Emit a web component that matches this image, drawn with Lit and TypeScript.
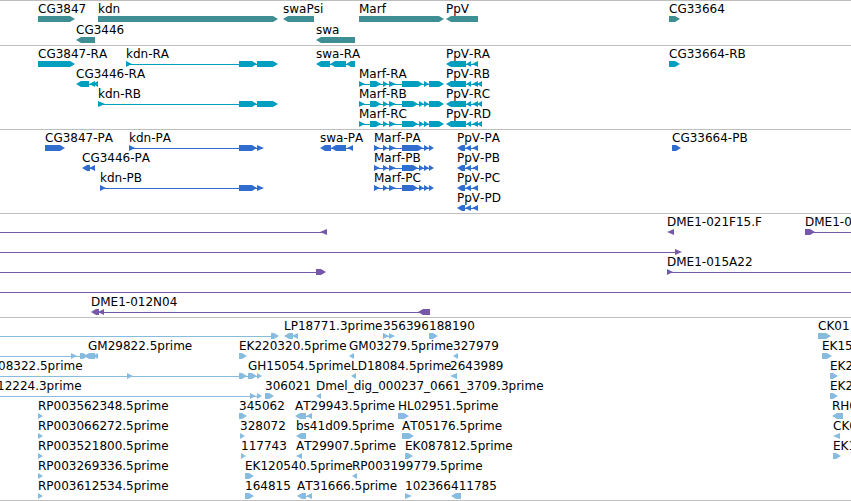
import { LitElement, html, css, svg } from "lit";
import { customElement, property } from "lit/decorators.js";
import { styleMap } from "lit/directives/style-map.js";

/** A block arrow: start, end and strand direction. */
type Arrow = [number, number, ">" | "<"];

interface Feature {
  at: number;
  label?: string;
  arrows?: Arrow[];
  /** Intron line; a missing end runs to the edge of the view. */
  line?: [number, number?];
}

type Row = Feature[];

interface Track {
  name: string;
  kind: string;
  rows: Row[];
}

const right = (...spans: [number, number][]): Arrow[] => spans.map(([a, b]) => [a, b, ">"]);
const left = (...spans: [number, number][]): Arrow[] => spans.map(([a, b]) => [a, b, "<"]);

/** A labelled feature whose arrows are joined by a line. */
const joined = (label: string, arrows: Arrow[]): Feature => ({
  at: arrows[0][0],
  label,
  arrows,
  line: [arrows[0][0] + 2, arrows[arrows.length - 1][1] - 2],
});

const plain = (label: string, arrows: Arrow[]): Feature => ({ at: arrows[0][0], label, arrows });

const kdnExons: [number, number][] = [[239, 257], [257, 278]];
const kdnCds: [number, number][] = [[239, 257], [257, 264]];
const marfLong = right([359, 365], [370, 381], [383, 388], [389, 396], [402, 418], [419, 424], [424, 429], [429, 444]);
const marfCds = right([374, 380], [383, 388], [389, 396], [402, 418], [419, 424], [424, 429], [429, 434]);
const ppvLong = left([446, 466], [466, 471], [472, 478], [477, 482]);
const ppvCds = left([457, 465], [465, 471], [472, 478]);

const tracks: Track[] = [
  {
    name: "Genes",
    kind: "gene",
    rows: [
      [
        plain("CG3847", right([38, 75])),
        plain("kdn", right([98, 278])),
        plain("swaPsi", left([283, 314])),
        plain("Marf", right([359, 444])),
        plain("PpV", left([446, 478])),
        plain("CG33664", right([669, 680])),
      ],
      [plain("CG3446", left([76, 95])), plain("swa", left([316, 355]))],
    ],
  },
  {
    name: "Transcripts",
    kind: "mrna",
    rows: [
      [
        plain("CG3847-RA", right([38, 75])),
        joined("kdn-RA", right([126, 132], ...kdnExons)),
        joined("swa-RA", left([316, 330], [330, 346], [346, 355])),
        joined("PpV-RA", left([446, 466], [466, 471], [472, 478])),
        plain("CG33664-RB", right([669, 680])),
      ],
      [
        joined("CG3446-RA", left([76, 89], [89, 95], [93, 98])),
        joined("Marf-RA", right([359, 365], [370, 381], [383, 388], [389, 396], [402, 423], [424, 429], [429, 444])),
        joined("PpV-RB", ppvLong),
      ],
      [
        joined("kdn-RB", right([98, 105], ...kdnExons)),
        joined("Marf-RB", marfLong),
        joined("PpV-RC", ppvLong),
      ],
      [joined("Marf-RC", marfLong), joined("PpV-RD", ppvLong)],
    ],
  },
  {
    name: "Coding sequences",
    kind: "cds",
    rows: [
      [
        plain("CG3847-PA", right([45, 65])),
        joined("kdn-PA", right([129, 135], ...kdnCds)),
        joined("swa-PA", left([320, 331], [331, 346], [347, 353])),
        joined("Marf-PA", right([374, 380], [383, 388], [389, 396], [402, 423], [424, 429], [429, 434])),
        joined("PpV-PA", ppvCds),
        plain("CG33664-PB", right([672, 681])),
      ],
      [
        joined("CG3446-PA", left([82, 90], [89, 95])),
        joined("Marf-PB", marfCds),
        joined("PpV-PB", ppvCds),
      ],
      [
        joined("kdn-PB", right([100, 106], ...kdnCds)),
        joined("Marf-PC", marfCds),
        joined("PpV-PC", ppvCds),
      ],
      [joined("PpV-PD", ppvCds)],
    ],
  },
  {
    name: "Clones",
    kind: "clone",
    rows: [
      [
        { at: 0, line: [0, 325], arrows: left([320, 327]) },
        plain("DME1-021F15.F", left([667, 674])),
        { at: 805, label: "DME1-0", line: [813], arrows: right([805, 815]) },
      ],
      [{ at: 0, line: [0, 677], arrows: right([675, 682]) }],
      [
        { at: 0, line: [0, 318], arrows: right([316, 326]) },
        { at: 667, label: "DME1-015A22", line: [669], arrows: right([667, 673]) },
      ],
      [{ at: 0, line: [0] }],
      [{ at: 91, label: "DME1-012N04", line: [98, 428], arrows: left([91, 99], [98, 104], [418, 430]) }],
    ],
  },
  {
    name: "Expressed sequence tags",
    kind: "est",
    rows: [
      [
        { at: 0, line: [0, 274], arrows: right([271, 279]) },
        plain("LP18771.3prime", left([284, 293], [292, 298])),
        joined("356396", right([383, 389], [389, 395])),
        plain("188190", right([429, 438])),
        plain("CK01", right([818, 831])),
      ],
      [
        { at: 0, line: [0, 82], arrows: right([71, 77], [80, 88]) },
        { at: 88, label: "GM29822.5prime", arrows: left([84, 95], [93, 98]) },
        plain("EK220320.5prime", right([239, 247])),
        plain("GM03279.5prime", left([349, 354])),
        plain("327979", left([453, 458])),
        plain("EK15", right([822, 832])),
      ],
      [
        { at: -2, label: "08322.5prime", line: [0, 260], arrows: right([127, 133], [239, 247], [248, 257], [257, 262]) },
        { at: 248, label: "GH15054.5prime" },
        plain("LD18084.5prime", left([351, 356])),
        plain("2643989", left([450, 457])),
        plain("EK2", right([830, 838])),
      ],
      [
        { at: -3, label: "12224.3prime", line: [0, 260], arrows: right([250, 256], [257, 262]) },
        plain("306021", right([265, 274])),
        plain("Dmel_dig_000237_0661_3709.3prime", left([316, 321])),
        plain("EK2", right([830, 838])),
      ],
      [
        plain("RP003562348.5prime", right([38, 43])),
        plain("345062", right([239, 247])),
        joined("AT29943.5prime", left([295, 306], [306, 312])),
        plain("HL02951.5prime", right([398, 409])),
        plain("RH0", left([832, 843])),
      ],
      [
        plain("RP003066272.5prime", right([38, 43])),
        plain("328072", right([240, 245])),
        plain("bs41d09.5prime", left([296, 306])),
        plain("AT05176.5prime", right([402, 414])),
        plain("CK0", left([833, 840])),
      ],
      [
        plain("RP003521800.5prime", right([38, 43])),
        plain("117743", right([241, 246])),
        plain("AT29907.5prime", left([296, 302])),
        plain("EK087812.5prime", right([405, 413])),
        plain("EK1", right([833, 841])),
      ],
      [
        plain("RP003269336.5prime", right([38, 43])),
        plain("EK120540.5prime", right([245, 254])),
        plain("RP003199779.5prime", left([352, 357])),
      ],
      [
        plain("RP003612534.5prime", right([38, 43])),
        plain("164815", right([245, 254])),
        joined("AT31666.5prime", left([297, 306], [306, 312])),
        plain("102366", right([405, 412])),
        plain("411785", left([451, 461])),
      ],
    ],
  },
];

/** Outline of a six pixel high arrow; short ones are plain triangles. */
function outline([a, b, strand]: Arrow): string {
  const width = b - a;
  const head = width > 7 ? 5 : width;
  const [tail, neck, tip] = strand === ">" ? [a, b - head, b] : [b, a + head, a];
  return `M${tail} 0H${neck}L${tip} 3L${neck} 6H${tail}Z`;
}

@customElement("feature-track")
class FeatureTrack extends LitElement {
  @property({ attribute: false }) rows: Row[] = [];

  static styles = css`
    :host {
      display: flex;
      flex-direction: column;
      gap: var(--row-gap, 0);
      overflow: hidden;
    }
    .labels {
      position: relative;
      height: 14px;
    }
    .label {
      position: absolute;
      top: 0;
      white-space: nowrap;
    }
    .glyphs {
      display: block;
      width: 100%;
      height: 6px;
      color: var(--glyph);
      fill: currentColor;
    }
    .intron {
      stroke: currentColor;
      stroke-width: 1;
      shape-rendering: crispEdges;
    }
  `;

  render() {
    return this.rows.map(
      (row) => html`
        <div class="row">
          <div class="labels">
            ${row
              .filter((f) => f.label)
              .map((f) => html`<span class="label" style=${styleMap({ left: `${f.at}px` })}>${f.label}</span>`)}
          </div>
          <svg class="glyphs" aria-hidden="true">
            ${row.map(
              (f) => svg`
                ${f.line
                  ? svg`<line class="intron" x1=${f.line[0]} x2=${f.line[1] ?? "100%"} y1="3.5" y2="3.5"></line>`
                  : null}
                ${(f.arrows ?? []).map((a) => svg`<path d=${outline(a)}></path>`)}
              `,
            )}
          </svg>
        </div>
      `,
    );
  }
}

@customElement("app-root")
class AppRoot extends LitElement {
  static styles = css`
    :host {
      display: block;
      background: #fff;
      color: #000;
      font: 12px/14px "DejaVu Sans", sans-serif;
      font-kerning: none;
      border-bottom: 1px solid #bebebe;
    }
    .track {
      border-top: 1px solid #bebebe;
      padding: 1px 0 2px;
    }
    .gene {
      --glyph: #3e8e93;
      --row-gap: 1px;
    }
    .mrna {
      --glyph: #009fc0;
    }
    .cds {
      --glyph: #306dce;
    }
    .clone {
      --glyph: #7658a8;
    }
    .est {
      --glyph: #87bcdf;
      padding-bottom: 1px;
    }
  `;

  render() {
    return html`
      <main>
        ${tracks.map(
          (t) => html`
            <section class="track ${t.kind}" aria-label=${t.name}>
              <feature-track .rows=${t.rows}></feature-track>
            </section>
          `,
        )}
      </main>
    `;
  }
}
